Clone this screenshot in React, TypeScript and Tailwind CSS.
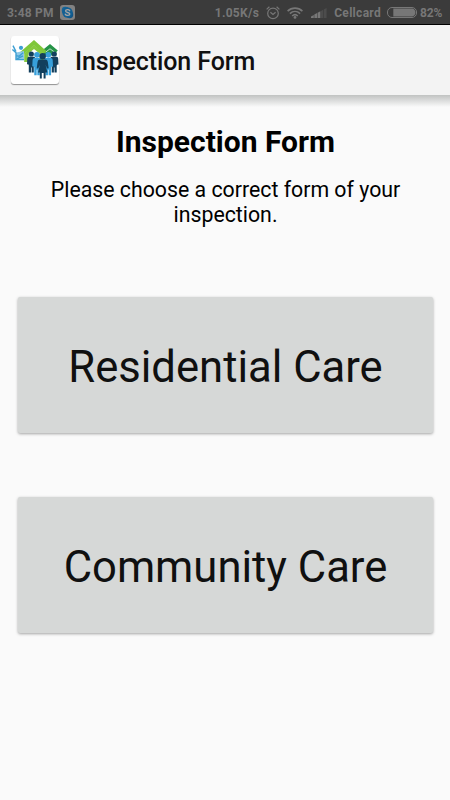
import React from "react";

function SkypeIcon() {
  return (
    <svg className="h-[15px] w-[15px]" viewBox="0 0 15 15">
      <rect width="15" height="15" rx="3" fill="#828282" />
      <rect x="1.8" y="1.8" width="7" height="7" rx="3.4" fill="#14669b" />
      <rect x="6.2" y="6.2" width="7" height="7" rx="3.4" fill="#115486" />
      <circle cx="7.5" cy="7.5" r="5.2" fill="#125f93" />
      <path
        d="M9.7 5.7C9 4.2 5.6 4.2 5.6 6c0 1.9 4.2 1.1 4.2 3 0 1.9-3.9 1.8-4.5.2"
        fill="none"
        stroke="#a5a5a5"
        strokeWidth="1.4"
        strokeLinecap="round"
      />
    </svg>
  );
}

function AlarmIcon() {
  return (
    <svg className="h-[14px] w-[14px]" viewBox="0 0 14 14" fill="none" stroke="#777777" strokeWidth="1.2">
      <circle cx="7" cy="7.4" r="5.3" />
      <path d="M4.4 6.2 7 8.4l2.6-2.2" />
      <path d="M.6 3.4 3.4.8M13.4 3.4 10.6.8" />
    </svg>
  );
}

function WifiIcon() {
  return (
    <svg className="h-3 w-4" viewBox="0 0 16 12" fill="none" stroke="#777777">
      <path d="M.6 4.1c4.2-4 10.6-4 14.8 0" strokeWidth="1.6" />
      <path d="M2.9 6.6c3-2.8 7.2-2.8 10.2 0" strokeWidth="1.6" />
      <path d="M5.2 9c1.6-1.5 4-1.5 5.6 0" strokeWidth="1.6" />
      <circle cx="8" cy="10.4" r="1.4" fill="#777777" stroke="none" />
    </svg>
  );
}

function SignalIcon() {
  return (
    <svg className="h-[11px] w-4" viewBox="0 0 16 11">
      <path d="M0 11V9.4l2.8-1.5V11z" fill="#777777" />
      <path d="M3.3 11V7.6l2.8-1.5V11z" fill="#777777" />
      <path d="M6.6 11V5.8l2.8-1.5V11z" fill="#777777" />
      <path d="M10 11V3.9l2.4-1.3V11z" fill="#4c4c4c" />
      <path d="M13 11V2.2L15.6.9V11z" fill="#4c4c4c" />
    </svg>
  );
}

function BatteryIcon() {
  return (
    <svg className="h-[11px] w-[30px]" viewBox="0 0 30 11">
      <rect x=".5" y=".5" width="29" height="10" rx="4.5" fill="none" stroke="#777777" />
      <path d="M6.3 1.6H25c2.2 0 3.4 1.8 3.4 3.9S27.2 9.4 25 9.4H6.3z" fill="#777777" />
    </svg>
  );
}

function Person({ x, y, color }: { x: number; y: number; color: string }) {
  return (
    <g transform={`translate(${x} ${y})`} fill={color}>
      <circle cx="0" cy="2.4" r="2.6" />
      <path d="M-2.4 5.2h4.8q1.5 0 1.6 1.8l.3 6-1.5.2-.3 1V21H.3v-5h-.6v5h-2.2v-7.1l-.3-1-1.5-.2.3-5.7q.1-1.8 1.6-1.8z" />
    </g>
  );
}

function AppLogo() {
  return (
    <div className="h-[48px] w-[48px] rounded-[3px] bg-white shadow-[0_1px_1px_rgba(0,0,0,0.4)]">
      <svg className="h-full w-full" viewBox="0 0 48 48">
        {/* houses */}
        <path d="m32 13.8 7-5.9 7.8 6.6-1.4 1.4v3.6H33z" fill="#269447" />
        <path d="m34.6 16.2 4.4-3.4 4.6 3.4" fill="none" stroke="#fff" strokeWidth=".7" />
        <path d="M13.2 17.5 23 8.8l9.8 8.7v8.5H13.2z" fill="#86c93f" />
        <path d="m10.6 17.6 12.4-11 11 9.8" fill="none" stroke="#7fc73a" strokeWidth="4" />
        <path d="M17.5 23v-5.5l5.5-4.6 5.5 4.6V23z" fill="#fff" />

        {/* waving figure */}
        <path d="M5 16.5 13 15v8.7H5z" fill="#8cc8e8" />
        <g fill="none" stroke="#3d9fd3" strokeWidth="1.4">
          <path d="m2 9.6 3 6M1.4 13.6l3.6 3.2M5 16.4v7.2h8M5 19.6l3 .6 4.2-3.4M6 22.8l6-3" />
        </g>
        <circle cx="10" cy="11.8" r="2.1" fill="#3d9fd3" />

        {/* group */}
        <Person x={20.3} y={15.6} color="#123f5d" />
        <Person x={43.2} y={15.6} color="#123f5d" />
        <g transform="translate(26 16.2) scale(1.1)">
          <Person x={0} y={0} color="#379fda" />
        </g>
        <g transform="translate(37.3 16.2) scale(1.1)">
          <Person x={0} y={0} color="#379fda" />
        </g>
        <g fill="#123f5d">
          <circle cx="31.7" cy="20.2" r="3.2" />
          <path d="M29 23.4h5.4q2.1 0 2.4 2.4l.9 6.4-1.6.4-1.5-3.6 1.8 7.4h-1.8v6.2h-2V37h-1.8v5.6h-2v-6.2H27l1.8-7.4-1.5 3.6-1.6-.4.9-6.4q.3-2.4 2.4-2.4z" />
        </g>
      </svg>
    </div>
  );
}

function StatusBar() {
  return (
    <div className="flex h-[25px] items-center border-b border-black bg-[#3b3b3b] pl-[7px] pr-[7px] pt-px text-[12px] font-bold text-[#777777]">
      <span className="w-[53px] whitespace-nowrap tracking-[0.2px]">3:48 PM</span>
      <SkypeIcon />
      <span className="ml-auto mr-[7px] tracking-[0.3px]">1.05K/s</span>
      <AlarmIcon />
      <span className="ml-[7px]">
        <WifiIcon />
      </span>
      <span className="ml-2">
        <SignalIcon />
      </span>
      <span className="ml-[7px] mr-1.5 tracking-[0.3px]">Cellcard</span>
      <BatteryIcon />
      <span className="ml-[3px] w-[23px] tracking-[-0.1px]">82%</span>
    </div>
  );
}

function FormButton({ label }: { label: string }) {
  return (
    <button className="flex h-[136px] w-full items-center justify-center rounded-[2px] bg-[#d6d8d7] pt-[5px] text-[43.6px] text-[#101010] shadow-[0_1px_3px_rgba(0,0,0,0.35)]">
      {label}
    </button>
  );
}

export default function App() {
  return (
    <div className="flex h-[800px] w-[450px] flex-col overflow-hidden bg-[#fafafa] font-['Roboto',sans-serif]">
      <StatusBar />

      <header className="flex h-[70px] items-center bg-[#f3f3f3] pl-[11px]">
        <AppLogo />
        <h1 className="ml-4 pt-[3px] text-[25px] font-medium tracking-[-0.1px] text-[#101010]">
          Inspection Form
        </h1>
      </header>
      <div className="h-3 bg-linear-to-b from-[#c1c3c2] to-[#fafafa]" />

      <main className="flex flex-col pl-[18px] pr-[17px] pt-[17px] text-center text-black">
        <h2 className="text-[30px] font-bold leading-[36px]">Inspection Form</h2>
        <p className="mt-[17px] px-4 text-[21.3px] leading-[25px]">
          Please choose a correct form of your inspection.
        </p>
        <div className="mt-[70px] flex flex-col gap-16">
          <FormButton label="Residential Care" />
          <FormButton label="Community Care" />
        </div>
      </main>
    </div>
  );
}
